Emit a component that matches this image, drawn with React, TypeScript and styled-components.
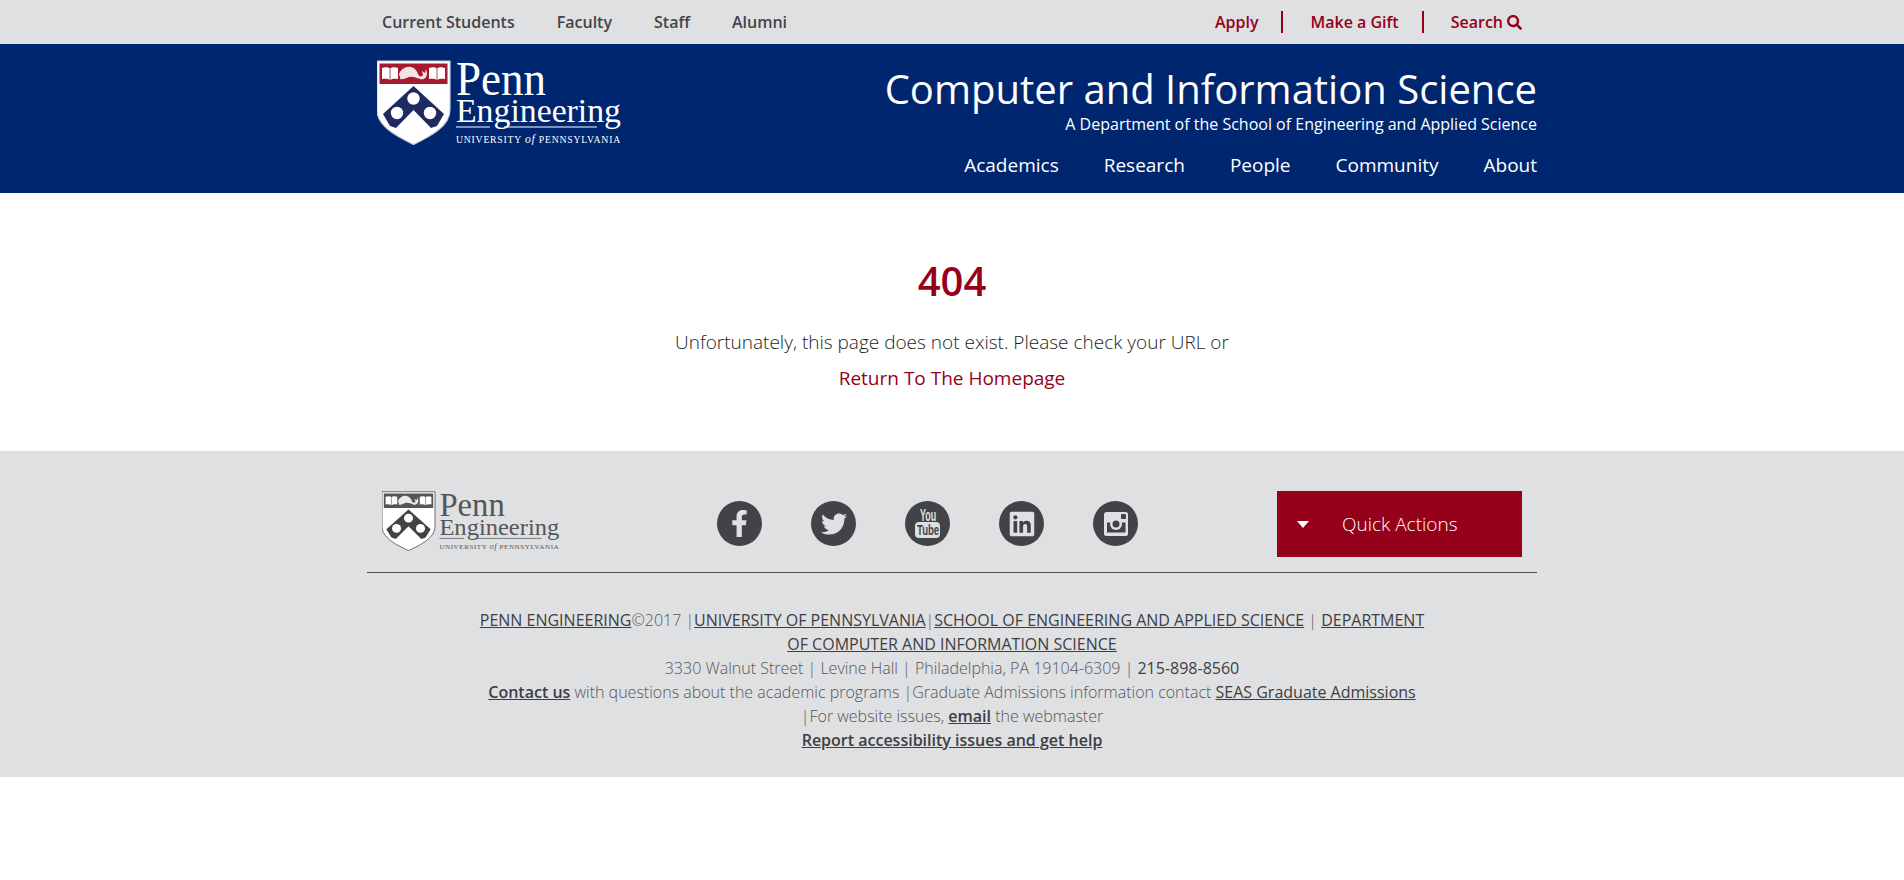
import React from 'react';
import styled, { createGlobalStyle } from 'styled-components';
import { FaFacebookF, FaLinkedin, FaSearch, FaTwitter } from 'react-icons/fa';

const GlobalStyle = createGlobalStyle`
  html, body {
    margin: 0;
    padding: 0;
    background: #fff;
    font-family: "Open Sans", "Liberation Sans", sans-serif;
  }
  a { text-decoration: none; color: inherit; }
`;

const Container = styled.div`
  width: 1170px;
  margin: 0 auto;
  box-sizing: border-box;
`;

const TopBar = styled.div`
  background: #dfe0e2;
  height: 44px;
`;

const TopBarInner = styled(Container)`
  display: flex;
  justify-content: space-between;
  align-items: center;
  height: 44px;
  padding: 0 15px;
`;

const AudienceNav = styled.nav`
  display: flex;
  gap: 42px;
`;

const AudienceLink = styled.a`
  color: #44454a;
  font-size: 16px;
  font-weight: 600;
  line-height: 22px;
`;

const UtilityNav = styled.nav`
  display: flex;
  align-items: center;
`;

const UtilityLink = styled.a<{ $divider?: boolean }>`
  color: #95001a;
  font-size: 16px;
  font-weight: 600;
  line-height: 22px;
  display: flex;
  align-items: center;
  gap: 4px;
  height: 22px;
  padding: 0 23px 0 28px;
  border-right: ${({ $divider }) => ($divider ? '2px solid #95001a' : 'none')};
  &:first-child { padding: 0 22px 0 0; }
  &:last-child { padding: 0 0 0 27px; }
`;

const Masthead = styled.header`
  background: #00266f;
  height: 149px;
`;

const MastheadInner = styled(Container)`
  display: flex;
  justify-content: space-between;
  align-items: flex-start;
  height: 149px;
  padding: 6px 0 0 10px;
`;

const Titles = styled.div`
  display: flex;
  flex-direction: column;
  align-items: flex-end;
  color: #fff;
  padding-top: 12px;
`;

const SiteTitle = styled.div`
  font-size: 40px;
  line-height: 54px;
`;

const SiteSubtitle = styled.div`
  font-size: 16px;
  line-height: 22px;
  margin-top: -3px;
`;

const MainNav = styled.nav`
  display: flex;
  gap: 45px;
  margin-top: 17px;
`;

const MainLink = styled.a`
  color: #fff;
  font-size: 19px;
  line-height: 26px;
`;

const Main = styled.main`
  height: 258px;
  box-sizing: border-box;
  padding-top: 60px;
  text-align: center;
`;

const ErrorCode = styled.h1`
  margin: 0;
  color: #95001a;
  font-size: 40px;
  font-weight: 600;
  line-height: 56px;
`;

const ErrorText = styled.p`
  margin: 15px 0 0;
  color: #1d1e22;
  font-size: 19px;
  font-weight: 300;
  line-height: 36px;
`;

const HomeLink = styled.a`
  display: block;
  color: #95001a;
  font-size: 19px;
  line-height: 36px;
`;

const Footer = styled.footer`
  background: #dfe0e2;
  height: 326px;
`;

const FooterTop = styled(Container)`
  display: flex;
  align-items: flex-start;
  justify-content: space-between;
  height: 122px;
  padding: 40px 15px 0;
  border-bottom: 1px solid #4a4b4f;
`;

const FooterLogoWrap = styled.div`
  width: 178px;
  flex: none;
  margin-top: -7px;
`;

const SocialList = styled.div`
  display: flex;
  gap: 49px;
  margin-top: 10px;
  margin-left: 18px;
`;

const SocialLink = styled.a`
  width: 45px;
  height: 45px;
  border-radius: 50%;
  background: #424347;
  color: #dfe0e2;
  display: flex;
  align-items: center;
  justify-content: center;
  font-size: 26px;
`;

const QuickActions = styled.button`
  width: 245px;
  height: 66px;
  border: 0;
  padding: 0 0 0 20px;
  background: #95001a;
  color: #fff;
  display: flex;
  align-items: center;
  font-family: inherit;
  font-size: 19px;
  font-weight: 300;
`;

const Caret = styled.span`
  width: 0;
  height: 0;
  border-left: 6px solid transparent;
  border-right: 6px solid transparent;
  border-top: 7px solid #fff;
  margin-right: 33px;
`;

const FooterText = styled.div`
  width: 960px;
  margin: 35px auto 0;
  text-align: center;
  color: #55565a;
  font-size: 16px;
  font-weight: 300;
  line-height: 24px;
`;

const FooterLink = styled.a<{ $strong?: boolean }>`
  color: #3d3e43;
  text-decoration: underline;
  font-weight: ${({ $strong }) => ($strong ? 600 : 400)};
`;

const Phone = styled.a`
  color: #3d3e43;
  font-weight: 400;
`;

const PennLogo: React.FC<{ width: number; height: number; text: string; band: string; chevron: string; rule: string; body: string }> = ({
  width,
  height,
  text,
  band,
  chevron,
  rule,
  body,
}) => (
  <svg width={width} height={height} viewBox="0 -10 245 95" preserveAspectRatio="none" style={{ display: 'block' }} role="img" aria-label="Penn Engineering">
    <path d="M0 1H73V50C73 66 54 76 36.500 84.500C19 76 0 66 0 50Z" fill={body} stroke={rule} strokeWidth="1.200" />
    <path d="M2.500 3.500H70.500V24H2.500Z" fill={band} />
    <path d="M5 8C8 7 11 7 13 8.500C15 7 18 7 21 8V19C18 18.500 15 18.500 13 20C11 18.500 8 18.500 5 19Z" fill="#fff" />
    <path d="M52 8C55 7 58 7 60 8.500C62 7 65 7 68 8V19C65 18.500 62 18.500 60 20C58 18.500 55 18.500 52 19Z" fill="#fff" />
    <path d="M13 8.500V20M60 8.500V20" stroke={band} strokeWidth=".8" />
    <path d="M22 14C24 9 29 6 34 7C38 8 40 11 41 14C42 17 45 17 46 15L45 11L48 13L49 9L50 13C50 18 47 20 43 19C39 18 36 16 32 17C29 18 26 20 23 19C24 17 22 16 22 14Z" fill="#fff" opacity=".88" />
    <path d="M36.500 26L67 54L60 66L54 68L36.500 50L19 68L13 66L6 54Z" fill={chevron} />
    <circle cx="36.500" cy="38.500" r="6.200" fill={body} />
    <circle cx="20" cy="53" r="6.200" fill={body} />
    <circle cx="53" cy="53" r="6.200" fill={body} />
    <g fill={text} fontFamily='"Liberation Serif", serif'>
      <text x="79" y="35" fontSize="49" textLength="90" lengthAdjust="spacingAndGlyphs">Penn</text>
      <text x="79" y="62" fontSize="34" textLength="165" lengthAdjust="spacingAndGlyphs">Engineering</text>
      <text x="79" y="82.500" fontSize="10" letterSpacing=".8" textLength="165" lengthAdjust="spacingAndGlyphs">
        UNIVERSITY <tspan fontStyle="italic" fontSize="12">of</tspan> PENNSYLVANIA
      </text>
    </g>
    <rect x="79" y="66.500" width="34" height="1" fill={text} />
    <rect x="127" y="66.500" width="93" height="1" fill={text} />
  </svg>
);

const YoutubeGlyph = () => (
  <svg width="25" height="35" viewBox="0 -3 25 35">
    <text transform="translate(5 12) scale(.56 1)" fontFamily='"Liberation Sans", sans-serif' fontWeight="700" fontSize="16" fill="#dfe0e2">You</text>
    <rect x="0" y="13" width="25" height="16" rx="4" fill="#dfe0e2" />
    <text transform="translate(2 26) scale(.64 1)" fontFamily='"Liberation Sans", sans-serif' fontWeight="700" fontSize="15" fill="#424347">Tube</text>
  </svg>
);

const InstagramGlyph = () => (
  <svg width="24" height="24" viewBox="0 0 24 24">
    <rect width="24" height="24" rx="2.500" fill="#dfe0e2" />
    <rect x="17" y="2" width="5" height="5" rx=".8" fill="#424347" />
    <rect x="3" y="10.500" width="18.500" height="10" fill="#424347" />
    <circle cx="12" cy="12" r="6" fill="#dfe0e2" />
    <circle cx="12" cy="12" r="3.500" fill="#424347" />
  </svg>
);

const App: React.FC = () => {
  const audiences = ['Current Students', 'Faculty', 'Staff', 'Alumni'];
  const sections = ['Academics', 'Research', 'People', 'Community', 'About'];

  return (
    <>
      <GlobalStyle />
      <TopBar>
        <TopBarInner>
          <AudienceNav>
            {audiences.map((label) => (
              <AudienceLink key={label} href="#">{label}</AudienceLink>
            ))}
          </AudienceNav>
          <UtilityNav>
            <UtilityLink href="#" $divider>Apply</UtilityLink>
            <UtilityLink href="#" $divider>Make a Gift</UtilityLink>
            <UtilityLink href="#">Search <FaSearch size={15} /></UtilityLink>
          </UtilityNav>
        </TopBarInner>
      </TopBar>

      <Masthead>
        <MastheadInner>
          <PennLogo width={245} height={95} text="#fff" band="#a6192e" chevron="#1f2a60" rule="#c9cde0" body="#fff" />
          <Titles>
            <SiteTitle>Computer and Information Science</SiteTitle>
            <SiteSubtitle>A Department of the School of Engineering and Applied Science</SiteSubtitle>
            <MainNav>
              {sections.map((label) => (
                <MainLink key={label} href="#">{label}</MainLink>
              ))}
            </MainNav>
          </Titles>
        </MastheadInner>
      </Masthead>

      <Main>
        <ErrorCode>404</ErrorCode>
        <ErrorText>Unfortunately, this page does not exist. Please check your URL or</ErrorText>
        <HomeLink href="#">Return To The Homepage</HomeLink>
      </Main>

      <Footer>
        <FooterTop>
          <FooterLogoWrap>
            <PennLogo width={178} height={67} text="#55565a" band="#55565a" chevron="#424347" rule="#55565a" body="#fff" />
          </FooterLogoWrap>
          <SocialList>
            <SocialLink href="#"><FaFacebookF size={27} /></SocialLink>
            <SocialLink href="#"><FaTwitter /></SocialLink>
            <SocialLink href="#"><YoutubeGlyph /></SocialLink>
            <SocialLink href="#"><FaLinkedin size={28} /></SocialLink>
            <SocialLink href="#"><InstagramGlyph /></SocialLink>
          </SocialList>
          <QuickActions type="button"><Caret />Quick Actions</QuickActions>
        </FooterTop>
        <FooterText>
          <FooterLink href="#">PENN ENGINEERING</FooterLink>©2017 |<FooterLink href="#">UNIVERSITY OF PENNSYLVANIA</FooterLink>|<FooterLink href="#">SCHOOL OF ENGINEERING AND APPLIED SCIENCE</FooterLink> | <FooterLink href="#">DEPARTMENT OF COMPUTER AND INFORMATION SCIENCE</FooterLink>
          <br />
          3330 Walnut Street | Levine Hall | Philadelphia, PA 19104-6309 | <Phone href="#">215-898-8560</Phone>
          <br />
          <FooterLink href="#" $strong>Contact us</FooterLink> with questions about the academic programs |Graduate Admissions information contact <FooterLink href="#">SEAS Graduate Admissions</FooterLink> |For website issues, <FooterLink href="#" $strong>email</FooterLink> the webmaster
          <br />
          <FooterLink href="#" $strong>Report accessibility issues and get help</FooterLink>
        </FooterText>
      </Footer>
    </>
  );
};

export default App;
